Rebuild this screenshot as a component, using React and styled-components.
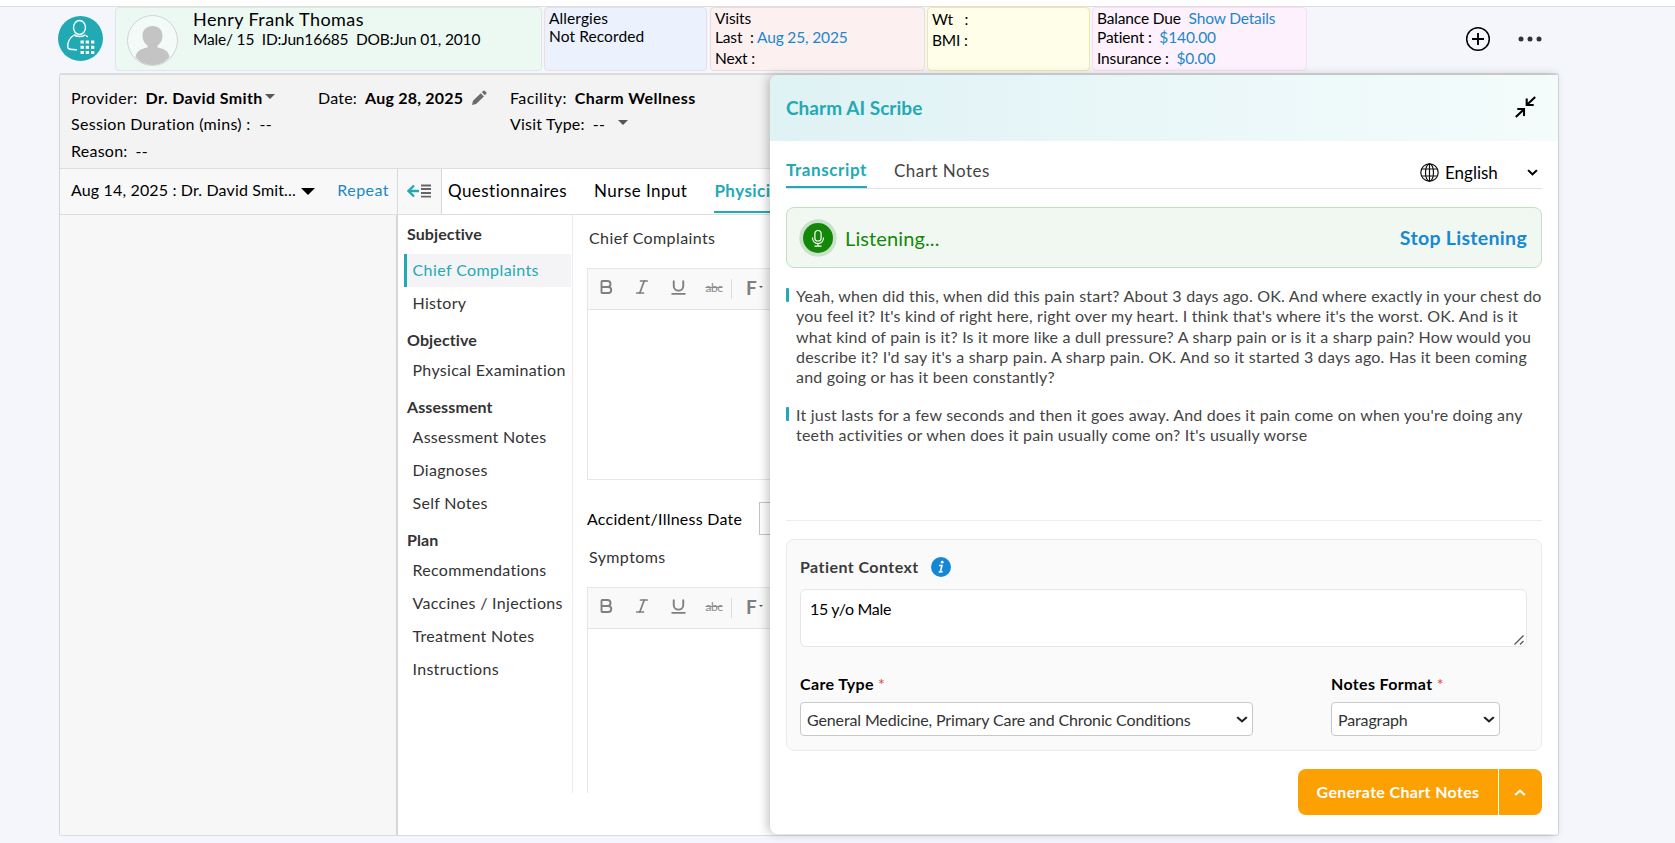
import React from "react";
import styled, { createGlobalStyle, css } from "styled-components";
import { Bold, Italic, Underline } from "lucide-react";

const GlobalStyle = createGlobalStyle`
  * {
    box-sizing: border-box;
  }
  body {
    margin: 0;
    background: #f4f6fb;
    color: #000;
    font-family: Lato, "Open Sans", sans-serif;
    font-size: 16px;
    font-variant-ligatures: none;
    letter-spacing: 0.3px;
    overflow: hidden;
  }
  svg {
    display: block;
    flex: none;
  }
`;

const Page = styled.div`
  height: 843px;
  border-top: 6px solid #fff;
  white-space: nowrap;
`;

/* ---------- patient header ---------- */

const PatientBar = styled.header`
  display: flex;
  align-items: flex-start;
  height: 67px;
  padding: 1px 0 0 58px;
  box-shadow: inset 0 1px 0 #dcdee0;
`;

const LogoWrap = styled.div`
  width: 57px;
  padding-top: 9px;
`;

const Card = styled.div`
  width: ${(p) => p.$w}px;
  height: 64px;
  margin-right: ${(p) => p.$gap || 3}px;
  padding: ${(p) => p.$pt || 1}px 0 0 4px;
  border: 1px solid ${(p) => p.$line};
  border-radius: 4px;
  background: ${(p) => p.$bg};
  font-size: 15.5px;
  letter-spacing: ${(p) => p.$ls || -0.15}px;
`;

const PatientCard = styled(Card)`
  display: flex;
  padding: 0 0 0 11px;
`;

const Avatar = styled.div`
  width: 51px;
  height: 51px;
  margin: 7px 15px 0 0;
`;

const PatientName = styled.div`
  font-size: 18px;
  line-height: 22px;
  letter-spacing: 0.42px;
`;

const PatientMeta = styled.div`
  line-height: 18px;
  white-space: pre;
  letter-spacing: -0.18px;
`;

const CardLine = styled.div`
  height: ${(p) => p.$h || 18}px;
  line-height: 18px;
  white-space: pre;
`;

const Link = styled.a`
  color: #1b87cc;
`;

const BarActions = styled.div`
  display: flex;
  align-items: center;
  gap: 26px;
  margin: 19px 0 0 155px;
`;

/* ---------- encounter ---------- */

const Encounter = styled.main`
  position: relative;
  width: 1500px;
  height: 763px;
  margin-left: 59px;
  border: 1px solid #d9dbdc;
  border-left-color: #d3d5d6;
  border-top-width: 2px;
  border-radius: 3px;
  background: #fff;
`;

const VisitInfo = styled.section`
  display: grid;
  grid-template-columns: 247px 192px auto;
  grid-template-rows: 26px 26px 27px;
  align-items: center;
  justify-content: start;
  height: 93px;
  padding: 10px 0 0 11px;
  background: #f3f3f3;
`;

const Field = styled.div`
  display: flex;
  align-items: center;
  line-height: 26px;
  letter-spacing: ${(p) => p.$ls || 0.3}px;

  b {
    margin-left: 8px;
  }
  span {
    margin-left: ${(p) => p.$gap || 8}px;
  }
`;

const Caret = styled.i`
  margin: -3px 0 0 ${(p) => p.$ml || 0}px;
  border: 5px solid transparent;
  border-top-color: #555;
  border-bottom: 0;
`;

const BigCaret = styled(Caret)`
  margin: 3px 0 0 5px;
  border: 7px solid transparent;
  border-top-color: #000;
  border-bottom: 0;
`;

const SizeCaret = styled(Caret)`
  margin: 0 0 0 2px;
  border-width: 2px 2px 0;
`;

const TabRow = styled.nav`
  display: flex;
  height: 47px;
  border-top: 1px solid #dedede;
  border-bottom: 1px solid #dedede;
`;

const VisitPicker = styled.div`
  display: flex;
  align-items: center;
  width: 338px;
  padding: 0 8px 4px 11px;
  border-right: 1px solid #d8d8d8;
  background: #f8f8f8;
  letter-spacing: 0.15px;

  a {
    margin-left: auto;
    letter-spacing: 0.45px;
  }
`;

const CollapseCell = styled.div`
  display: flex;
  width: 44px;
  padding: 15px 0 0 9px;
  border-right: 1px solid #d8d8d8;
  background: #f8f8f8;
`;

const Tab = styled.div`
  height: 44px;
  margin-left: ${(p) => p.$ml}px;
  border-bottom: 2px solid ${(p) => (p.$active ? "#22aab4" : "transparent")};
  color: ${(p) => (p.$active ? "#22aab4" : "#000")};
  font-size: 17px;
  font-weight: ${(p) => (p.$active ? 700 : 400)};
  line-height: 43px;
  letter-spacing: 0.45px;
`;

const Body = styled.div`
  display: flex;
  height: 620px;
`;

const History = styled.aside`
  width: 338px;
  border-right: 2px solid #d6d7d8;
  background: #f7f7f7;
`;

const SideNav = styled.div`
  width: 175px;
  height: 578px;
  padding: 0 1px 0 6px;
  border-right: 1px solid #ececec;
`;

const NavHeading = styled.div`
  height: ${(p) => (p.$first ? 39 : 34.5)}px;
  padding: ${(p) => (p.$first ? 9 : 10)}px 0 0 3px;
  color: #333;
  font-weight: 700;
  line-height: 20px;
  letter-spacing: 0.1px;
`;

const NavItem = styled.div`
  height: 32.8px;
  padding-left: 5.5px;
  border-left: 3px solid transparent;
  color: #333;
  line-height: 31px;

  ${(p) =>
    p.$active &&
    css`
      border-color: #22aab4;
      background: #f4f4f7;
      color: #22aab4;
      letter-spacing: 0.4px;
    `}
`;

const Editors = styled.section`
  width: 620px;
  height: 578px;
  padding-left: 14px;
  overflow: hidden;
`;

const EditorLabel = styled.div`
  height: ${(p) => p.$h}px;
  padding: ${(p) => p.$pt}px 0 0 2px;
  color: #333;
  line-height: 20px;
  letter-spacing: 0.4px;
`;

const Editor = styled.div`
  height: ${(p) => p.$h}px;
  border: 1px solid #e6e6e6;
`;

const Toolbar = styled.div`
  display: flex;
  align-items: center;
  height: 41px;
  padding: 0 0 4px;
  border-bottom: 1px solid #e3e3e3;
  background: #f9f9f9;
  color: #7d7f82;
`;

const Tool = styled.div`
  display: flex;
  justify-content: center;
  width: 36px;
`;

const Strike = styled.s`
  color: #8b8b8b;
  font-size: 12px;
  letter-spacing: -0.5px;
`;

const ToolDivider = styled.div`
  width: 1px;
  height: 20px;
  margin: 4px 14px 0 -1px;
  background: #dcdcdc;
`;

const FontTool = styled.b`
  font-size: 19px;
  letter-spacing: 0;
`;

const DateRow = styled.div`
  display: flex;
  align-items: center;
  height: 33px;
  margin-top: 22px;
  letter-spacing: 0.25px;
`;

const DateInput = styled.div`
  width: 160px;
  height: 33px;
  margin-left: 17px;
  border: 1px solid #c3c5c6;
`;

/* ---------- scribe drawer, floats over the encounter ---------- */

const Drawer = styled.section`
  position: absolute;
  top: 0;
  right: 0;
  width: 788px;
  height: 759px;
  border-radius: 8px 0 0 8px;
  background: #fff;
  box-shadow: -3px 0 10px rgba(0, 0, 0, 0.22);
`;

const DrawerHead = styled.header`
  display: flex;
  align-items: center;
  justify-content: space-between;
  height: 66px;
  padding: 0 22px 2px 16px;
  border-radius: 8px 0 0 0;
  background: linear-gradient(90deg, #dff2f4, #f0fafb 80%, #f3fcfa);
`;

const DrawerTitle = styled.h1`
  margin: 0;
  color: #22aab4;
  font-size: 19px;
  font-weight: 700;
  letter-spacing: 0.04px;
`;

const DrawerBody = styled.div`
  padding: 0 16px;
`;

const DrawerTabs = styled.div`
  display: flex;
  height: 48px;
  border-bottom: 1px solid #e2e2e2;
`;

const DrawerTab = styled.div`
  height: 47px;
  margin-right: 27px;
  padding-top: ${(p) => (p.$active ? 19 : 20)}px;
  border-bottom: 2px solid ${(p) => (p.$active ? "#22aab4" : "transparent")};
  color: ${(p) => (p.$active ? "#22aab4" : "#444")};
  font-size: 17px;
  font-weight: ${(p) => (p.$active ? 700 : 400)};
  line-height: 20px;
  letter-spacing: ${(p) => (p.$active ? 0.58 : 0.5)}px;
`;

const Language = styled.div`
  display: flex;
  align-items: center;
  width: 122px;
  height: 20px;
  margin: 21px 0 0 auto;
  padding-right: 4px;
  font-size: 17px;
  letter-spacing: 0;

  span {
    margin: 0 auto 0 6px;
  }
`;

const ListenBox = styled.div`
  display: flex;
  align-items: center;
  height: 61px;
  margin-top: 18px;
  padding: 0 14px 0 12px;
  border: 1px solid #bfe0c1;
  border-radius: 8px;
  background: #f1f8f2;
`;

const ListenText = styled.span`
  margin-left: 8px;
  padding-top: 1px;
  color: #138808;
  font-size: 20px;
  letter-spacing: 0.12px;
`;

const StopButton = styled.b`
  margin-left: auto;
  color: #1788d3;
  font-size: 19.5px;
  letter-spacing: 0.3px;
`;

const Transcript = styled.div`
  height: 253px;
  padding-top: 18px;
  border-bottom: 1px solid #ececec;
`;

const Utterance = styled.div`
  display: flex;
  margin-bottom: 17.4px;
  color: #444;
  line-height: 20.25px;
  letter-spacing: 0.21px;

  &:before {
    content: "";
    flex: none;
    width: 3px;
    height: 14px;
    margin: 2px 7px 0 0;
    border-radius: 1px;
    background: #22aab4;
  }
`;

const ContextBox = styled.div`
  height: 212px;
  margin-top: 18px;
  padding: 16px 14px 0 13px;
  border: 1px solid #ebebeb;
  border-radius: 8px;
  background: #fafafa;
`;

const ContextTitle = styled.div`
  display: flex;
  align-items: center;
  gap: 12px;
  height: 21px;
  color: #3a3a3a;
  font-weight: 700;
  letter-spacing: 0.44px;
`;

const ContextInput = styled.div`
  display: flex;
  justify-content: space-between;
  align-items: flex-end;
  height: 58px;
  margin-top: 12px;
  padding: 9px 2px 1px 9px;
  border: 1px solid #e6e6e6;
  border-radius: 6px;
  background: #fff;
  letter-spacing: -0.3px;

  span {
    align-self: flex-start;
    line-height: 20px;
  }
`;

const Selects = styled.div`
  display: flex;
  gap: 78px;
  margin-top: 26px;
`;

const SelectLabel = styled.div`
  height: 29px;
  font-weight: 700;
  line-height: 21px;
  letter-spacing: 0.35px;

  span {
    color: #e8412c;
    font-weight: 400;
  }
`;

const SelectBox = styled.div`
  display: flex;
  align-items: center;
  justify-content: space-between;
  width: ${(p) => p.$w}px;
  height: 34px;
  padding: 0 4px 0 6px;
  border: 1px solid #c6c8c9;
  border-radius: 4px;
  background: #fff;
  color: #333;
  letter-spacing: -0.13px;

  span {
    padding-top: 1px;
  }
`;

const GenerateButton = styled.div`
  display: flex;
  width: 244px;
  height: 46px;
  margin: 18px 0 0 auto;
  border-radius: 8px;
  background: #fda002;
  color: #fff;
  font-weight: 700;
  line-height: 45px;
  letter-spacing: 0.35px;
`;

const GenerateLabel = styled.div`
  width: 201px;
  border-right: 1px solid #fff;
  text-align: center;
`;

const GenerateMore = styled.div`
  display: flex;
  flex: 1;
  align-items: center;
  justify-content: center;
  padding-right: 1px;
`;

const Chevron = ({ w = 10, up = false, color = "#222" }) => (
  <svg width={w} height={7} viewBox="0 0 10 7" preserveAspectRatio="none">
    <path
      d={up ? "M1 6 5 1.7 9 6" : "M1 1.2 5 5.4 9 1.2"}
      fill="none"
      stroke={color}
      strokeWidth="1.9"
    />
  </svg>
);

const Logo = () => (
  <svg width="45" height="45" viewBox="0 0 45 45">
    <circle cx="22.5" cy="22.5" r="22.5" fill="#22aab4" />
    <g fill="none" stroke="#fff" strokeWidth="1.4">
      <ellipse cx="21.5" cy="11.5" rx="6" ry="7" />
      <path d="M16 18.5c2 2.6 9 2.6 11.5.3M15.5 19.5C11.5 22 9.5 27 9.8 31.500c.2 2 3 2 9.200 2.200M28 19.500l1.800 1.500" />
    </g>
    <g fill="#fff">
      {[24.5, 29.8, 35].map((y) =>
        [22.5, 27.7, 33].map((x) => (
          <rect key={`${x}-${y}`} x={x} y={y} width="3.3" height="3" />
        ))
      )}
    </g>
  </svg>
);

const Person = () => (
  <svg width="51" height="51" viewBox="0 0 51 51">
    <circle cx="25.5" cy="25.5" r="25" fill="#fff" fillOpacity=".35" stroke="#d2d2d2" />
    <path
      d="M25.500 11c6 0 10 4 10 9.500 0 4.500-2 8-5 10v2c7 1 11 4 12 9.500-4 5-10 8-17 8s-13-3-17-8c1-5.500 5-8.500 12-9.500v-2c-3-2-5-5.500-5-10 0-5.500 4-9.500 10-9.500z"
      fill="#c4c4c4"
    />
  </svg>
);

const Pencil = () => (
  <svg width="16" height="16" viewBox="0 0 16 16" fill="#6b6b6b">
    <path d="M1 15l1-4.200 7.800-7.600 3.100 3.200-7.800 7.600zM10.800 2.200 12.500.7q.6-.5 1.200 0l1.700 1.700q.5.600 0 1.200L13.900 5.300z" />
  </svg>
);

const CollapseNav = () => (
  <svg width="24" height="14" viewBox="0 0 24 14" fill="none">
    <path d="M12 7H2M7 1.500 1.500 7 7 12.500" stroke="#22aab4" strokeWidth="2.3" />
    <path d="M14 1.500h10M14 5h10M14 9h10M14 12.700h10" stroke="#666" strokeWidth="1.8" />
  </svg>
);

const Shrink = () => (
  <svg width="21" height="22" viewBox="0 0 21 22" fill="none" stroke="#000" strokeWidth="2.1">
    <path d="M20.200 1 12 8.800M11.700 2.500V9h7M.8 21 9 13.200M2.300 13H9v7" />
  </svg>
);

const Globe = () => (
  <svg width="19" height="19" viewBox="0 0 19 19" fill="none" stroke="#111" strokeWidth="1.2">
    <circle cx="9.5" cy="9.5" r="8.7" />
    <ellipse cx="9.5" cy="9.5" rx="4" ry="8.7" />
    <path d="M9.500.8v17.400M1.700 6h15.600M1.700 13h15.600" />
  </svg>
);

const Mic = () => (
  <svg width="38" height="38" viewBox="0 0 38 38">
    <circle cx="19" cy="19" r="18.7" fill="#cbe1cb" />
    <circle cx="19" cy="19" r="15" fill="#138808" />
    <g fill="none" stroke="#fff" strokeWidth="1.2">
      <rect x="15.9" y="11.5" width="6.2" height="10.5" rx="3.1" />
      <path d="M13.500 18.500c0 8 11 8 11 0M19 24.500V27M15.500 27.200h7" />
    </g>
  </svg>
);

const Info = () => (
  <svg width="20" height="20" viewBox="0 0 20 20">
    <circle cx="10" cy="10" r="10" fill="#1588d3" />
    <circle cx="11.2" cy="5.2" r="1.4" fill="#fff" />
    <path d="M8 8.500h3l-1.600 6.300h2.300M7.700 14.900h2" fill="none" stroke="#fff" strokeWidth="1.5" />
  </svg>
);

const navGroups = [
  { title: "Subjective", items: ["Chief Complaints", "History"] },
  { title: "Objective", items: ["Physical Examination"] },
  { title: "Assessment", items: ["Assessment Notes", "Diagnoses", "Self Notes"] },
  {
    title: "Plan",
    items: ["Recommendations", "Vaccines / Injections", "Treatment Notes", "Instructions"],
  },
];

const utterances = [
  [
    "Yeah, when did this, when did this pain start? About 3 days ago. OK. And where exactly in your chest do",
    "you feel it? It's kind of right here, right over my heart. I think that's where it's the worst. OK. And is it",
    "what kind of pain is it? Is it more like a dull pressure? A sharp pain or is it a sharp pain? How would you",
    "describe it? I'd say it's a sharp pain. A sharp pain. OK. And so it started 3 days ago. Has it been coming",
    "and going or has it been constantly?",
  ],
  [
    "It just lasts for a few seconds and then it goes away. And does it pain come on when you're doing any",
    "teeth activities or when does it pain usually come on? It's usually worse",
  ],
];

const EditorToolbar = () => (
  <Toolbar>
    <Tool><Bold size={18} strokeWidth={2.5} /></Tool>
    <Tool><Italic size={18} strokeWidth={2.3} /></Tool>
    <Tool><Underline size={19} strokeWidth={2.4} /></Tool>
    <Tool><Strike>abc</Strike></Tool>
    <ToolDivider />
    <FontTool>F</FontTool>
    <SizeCaret />
  </Toolbar>
);

const PatientHeader = () => (
  <PatientBar>
    <LogoWrap>
      <Logo />
    </LogoWrap>
    <PatientCard $w={427} $gap={2} $bg="#ecf9f3" $line="#dfe6e4">
      <Avatar>
        <Person />
      </Avatar>
      <div>
        <PatientName>Henry Frank Thomas</PatientName>
        <PatientMeta>Male/ 15  ID:Jun16685  DOB:Jun 01, 2010</PatientMeta>
      </div>
    </PatientCard>
    <Card $w={163} $ls={0.1} $bg="#ebf2fe" $line="#ecdfe4">
      <CardLine>Allergies</CardLine>
      <CardLine>Not Recorded</CardLine>
    </Card>
    <Card $w={215} $gap={2} $bg="#fdf0f0" $line="#eddcdc">
      <CardLine $h={19}>Visits</CardLine>
      <CardLine $h={21}>Last  : <Link>Aug 25, 2025</Link></CardLine>
      <CardLine>Next :</CardLine>
    </Card>
    <Card $w={163} $gap={2} $pt={2} $bg="#ffffe9" $line="#efe6a8">
      <CardLine $h={21}>Wt   :</CardLine>
      <CardLine>BMI :</CardLine>
    </Card>
    <Card $w={215} $bg="#fdf1fe" $line="#f8dcf3">
      <CardLine $h={19}>Balance Due  <Link>Show Details</Link></CardLine>
      <CardLine $h={21}>Patient :  <Link>$140.00</Link></CardLine>
      <CardLine>Insurance :  <Link>$0.00</Link></CardLine>
    </Card>
    <BarActions>
      <svg width="26" height="26" viewBox="0 0 26 26" fill="none" stroke="#000">
        <circle cx="13" cy="13" r="11.3" strokeWidth="1.5" />
        <path d="M13 7v12M7 13h12" strokeWidth="1.9" />
      </svg>
      <svg width="26" height="6" viewBox="0 0 26 6" fill="#333">
        <circle cx="4" cy="3" r="2.5" />
        <circle cx="13" cy="3" r="2.5" />
        <circle cx="22" cy="3" r="2.5" />
      </svg>
    </BarActions>
  </PatientBar>
);

const ScribeDrawer = () => (
  <Drawer>
    <DrawerHead>
      <DrawerTitle>Charm AI Scribe</DrawerTitle>
      <Shrink />
    </DrawerHead>
    <DrawerBody>
      <DrawerTabs>
        <DrawerTab $active>Transcript</DrawerTab>
        <DrawerTab>Chart Notes</DrawerTab>
        <Language>
          <Globe />
          <span>English</span>
          <Chevron w={11} color="#000" />
        </Language>
      </DrawerTabs>
      <ListenBox>
        <Mic />
        <ListenText>Listening...</ListenText>
        <StopButton>Stop Listening</StopButton>
      </ListenBox>
      <Transcript>
        {utterances.map((lines) => (
          <Utterance key={lines[0]}>
            <div>
              {lines.map((line) => (
                <div key={line}>{line}</div>
              ))}
            </div>
          </Utterance>
        ))}
      </Transcript>
      <ContextBox>
        <ContextTitle>
          Patient Context <Info />
        </ContextTitle>
        <ContextInput>
          <span>15 y/o Male</span>
          <svg width="10" height="10" viewBox="0 0 10 10" stroke="#555" strokeWidth="1.3">
            <path d="M.5 9.500l9-9M6 9.500 9.500 6" />
          </svg>
        </ContextInput>
        <Selects>
          <div>
            <SelectLabel>
              Care Type <span>*</span>
            </SelectLabel>
            <SelectBox $w={453}>
              <span>General Medicine, Primary Care and Chronic Conditions</span>
              <Chevron w={12} />
            </SelectBox>
          </div>
          <div>
            <SelectLabel>
              Notes Format <span>*</span>
            </SelectLabel>
            <SelectBox $w={169}>
              <span>Paragraph</span>
              <Chevron w={12} />
            </SelectBox>
          </div>
        </Selects>
      </ContextBox>
      <GenerateButton>
        <GenerateLabel>Generate Chart Notes</GenerateLabel>
        <GenerateMore>
          <Chevron w={12} up color="#fff" />
        </GenerateMore>
      </GenerateButton>
    </DrawerBody>
  </Drawer>
);

const App = () => {
  return (
    <Page>
      <GlobalStyle />
      <PatientHeader />
      <Encounter>
        <VisitInfo>
          <Field $ls={0.38}>
            Provider: <b>Dr. David Smith</b>
            <Caret $ml={2} />
          </Field>
          <Field $ls={0.22}>
            Date: <b>Aug 28, 2025</b>
            <span>
              <Pencil />
            </span>
          </Field>
          <Field $ls={0.43}>
            Facility: <b>Charm Wellness</b>
          </Field>
          <Field $gap={9}>
            Session Duration (mins) : <span>--</span>
          </Field>
          <div />
          <Field $ls={0.2}>
            Visit Type: <span>--</span>
            <Caret $ml={13} />
          </Field>
          <Field $ls={0.25}>
            Reason: <span>--</span>
          </Field>
        </VisitInfo>
        <TabRow>
          <VisitPicker>
            Aug 14, 2025 : Dr. David Smit...
            <BigCaret />
            <Link>Repeat</Link>
          </VisitPicker>
          <CollapseCell>
            <CollapseNav />
          </CollapseCell>
          <Tab $ml={6}>Questionnaires</Tab>
          <Tab $ml={27}>Nurse Input</Tab>
          <Tab $ml={27} $active>
            Physician
          </Tab>
        </TabRow>
        <Body>
          <History />
          <SideNav>
            {navGroups.map((group, i) => (
              <div key={group.title}>
                <NavHeading $first={i === 0}>{group.title}</NavHeading>
                {group.items.map((item) => (
                  <NavItem key={item} $active={item === "Chief Complaints"}>
                    {item}
                  </NavItem>
                ))}
              </div>
            ))}
          </SideNav>
          <Editors>
            <EditorLabel $h={53} $pt={13}>Chief Complaints</EditorLabel>
            <Editor $h={212}>
              <EditorToolbar />
            </Editor>
            <DateRow>
              Accident/Illness Date
              <DateInput />
            </DateRow>
            <EditorLabel $h={52} $pt={12}>Symptoms</EditorLabel>
            <Editor $h={260}>
              <EditorToolbar />
            </Editor>
          </Editors>
        </Body>
        <ScribeDrawer />
      </Encounter>
    </Page>
  );
};

export default App;
